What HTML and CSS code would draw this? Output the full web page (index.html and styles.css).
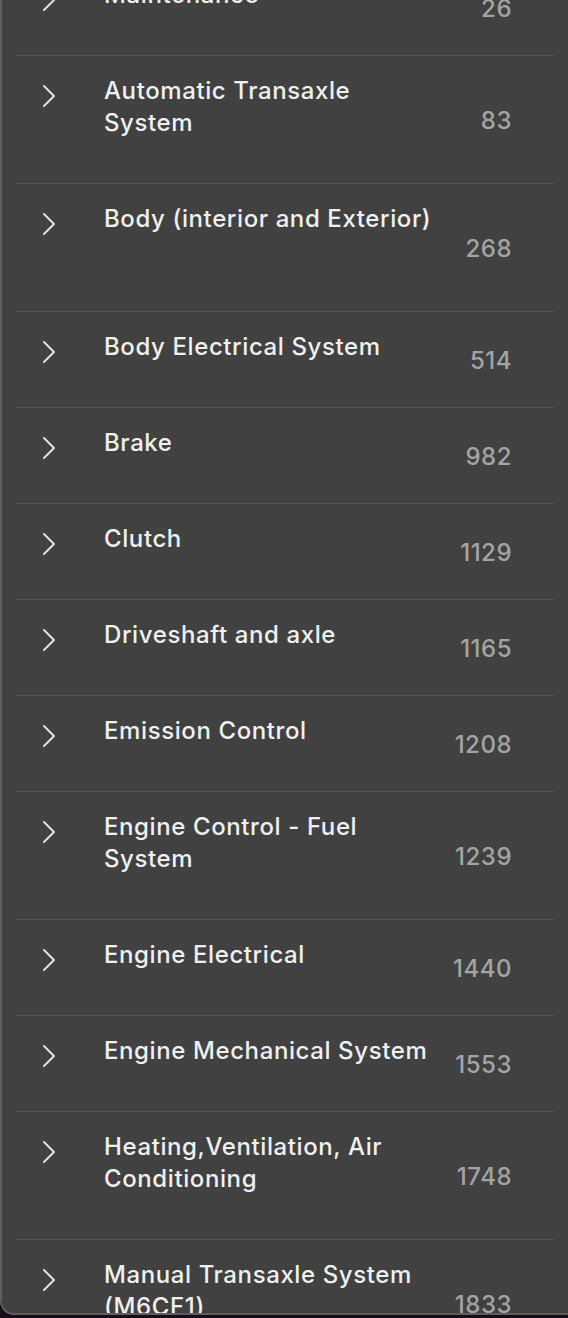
FILE: index.html
```html
<!DOCTYPE html>
<html lang="en">
<head>
    <meta charset="UTF-8">
    <meta name="viewport" content="width=device-width, initial-scale=1.0">
    <title>Contents</title>
    <link rel="stylesheet" href="styles.css">
</head>
<body>
    <div class="panel">
        <ul class="outline">
            <li class="item">
                <span class="chevron"><svg viewBox="0 0 14 24"><path d="M2 2 L12 12 L2 22"/></svg></span>
                <span class="title">Maintenance</span>
                <span class="page">26</span>
            </li>
            <li class="item">
                <span class="chevron"><svg viewBox="0 0 14 24"><path d="M2 2 L12 12 L2 22"/></svg></span>
                <span class="title">Automatic Transaxle System</span>
                <span class="page">83</span>
            </li>
            <li class="item item-tall">
                <span class="chevron"><svg viewBox="0 0 14 24"><path d="M2 2 L12 12 L2 22"/></svg></span>
                <span class="title">Body (interior and Exterior)</span>
                <span class="page">268</span>
            </li>
            <li class="item">
                <span class="chevron"><svg viewBox="0 0 14 24"><path d="M2 2 L12 12 L2 22"/></svg></span>
                <span class="title">Body Electrical System</span>
                <span class="page">514</span>
            </li>
            <li class="item">
                <span class="chevron"><svg viewBox="0 0 14 24"><path d="M2 2 L12 12 L2 22"/></svg></span>
                <span class="title">Brake</span>
                <span class="page">982</span>
            </li>
            <li class="item">
                <span class="chevron"><svg viewBox="0 0 14 24"><path d="M2 2 L12 12 L2 22"/></svg></span>
                <span class="title">Clutch</span>
                <span class="page">1129</span>
            </li>
            <li class="item">
                <span class="chevron"><svg viewBox="0 0 14 24"><path d="M2 2 L12 12 L2 22"/></svg></span>
                <span class="title">Driveshaft and axle</span>
                <span class="page">1165</span>
            </li>
            <li class="item">
                <span class="chevron"><svg viewBox="0 0 14 24"><path d="M2 2 L12 12 L2 22"/></svg></span>
                <span class="title">Emission Control</span>
                <span class="page">1208</span>
            </li>
            <li class="item">
                <span class="chevron"><svg viewBox="0 0 14 24"><path d="M2 2 L12 12 L2 22"/></svg></span>
                <span class="title">Engine Control - Fuel System</span>
                <span class="page">1239</span>
            </li>
            <li class="item">
                <span class="chevron"><svg viewBox="0 0 14 24"><path d="M2 2 L12 12 L2 22"/></svg></span>
                <span class="title">Engine Electrical</span>
                <span class="page">1440</span>
            </li>
            <li class="item">
                <span class="chevron"><svg viewBox="0 0 14 24"><path d="M2 2 L12 12 L2 22"/></svg></span>
                <span class="title">Engine Mechanical System</span>
                <span class="page">1553</span>
            </li>
            <li class="item">
                <span class="chevron"><svg viewBox="0 0 14 24"><path d="M2 2 L12 12 L2 22"/></svg></span>
                <span class="title">Heating,Ventilation, Air Conditioning</span>
                <span class="page">1748</span>
            </li>
            <li class="item">
                <span class="chevron"><svg viewBox="0 0 14 24"><path d="M2 2 L12 12 L2 22"/></svg></span>
                <span class="title">Manual Transaxle System (M6CF1)</span>
                <span class="page">1833</span>
            </li>
        </ul>
    </div>
</body>
</html>
```

FILE: styles.css
```css
body {
    margin: 0;
    background-color: #150d19;
    font-family: Inter, 'Noto Sans', sans-serif;
}
.panel {
    height: 1315px;
    box-sizing: border-box;
    background-color: #414141;
    border-left: 2px solid #5e5e5e;
    border-bottom: 2px solid #5e5e5e;
    border-bottom-left-radius: 14px;
    overflow: hidden;
}
.outline {
    list-style: none;
    margin: -41px 0 0;
    padding: 0;
}
.item {
    display: flex;
    align-items: center;
    min-height: 95px;
    margin: 0 14px 0 14px;
    padding-right: 42px;
    border-top: 1px solid #575757;
}
.item-tall .title {
    padding-bottom: 76px;
}
.chevron {
    align-self: flex-start;
    flex: none;
    width: 14px;
    height: 24px;
    margin: 28px 48px 0 26px;
}
.chevron svg {
    display: block;
    width: 14px;
    height: 24px;
    fill: none;
    stroke: #e4e4e4;
    stroke-width: 1.9;
    stroke-linecap: round;
    stroke-linejoin: round;
}
.title {
    align-self: flex-start;
    max-width: 332px;
    padding: 19px 0 44px;
    font-size: 24px;
    font-weight: 500;
    letter-spacing: 0.6px;
    line-height: 32px;
    color: #f0f0f0;
}
.page {
    margin: 2px 0 0 auto;
    font-size: 24px;
    font-weight: 500;
    letter-spacing: 0.5px;
    line-height: 32px;
    color: #a4a4a4;
}
```
